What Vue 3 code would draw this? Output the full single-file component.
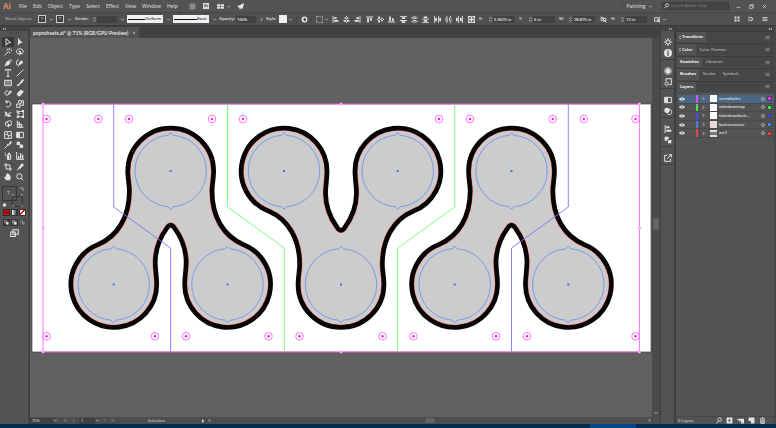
<script setup>
import { h, ref } from 'vue'

const glyphs = {
  chev: { s: 'M3 4.5L6 7.5L9 4.5' },
  spin: { s: 'M3 4.5L6 1.5L9 4.5M3 7.5L6 10.5L9 7.5' },
  left: { s: 'M8 3L4 6L8 9' },
  right: { s: 'M4 3L8 6L4 9' },
  first: { s: 'M9 3L5 6L9 9M3 3V9' },
  last: { s: 'M3 3L7 6L3 9M9 3V9' },
  play: { f: 'M3 1L10 6L3 11Z' },
  menu: { s: 'M1 3H11M1 6H11M1 9H11' },
  collapse: { f: 'M6 3V9L2 6ZM11 3V9L7 6Z' },
  bridge: { f: 'M1 1H11V11H1Z' },
  arrange: { f: 'M0 2H5V5.5H0ZM6 2H12V5.5H6ZM0 6.5H5V10H0ZM6 6.5H12V10H6Z' },
  rocket: { f: 'M12 0L0 6L4 8L5 12L7 9L10 10Z' },
  globe: { f: 'M6 1A5 5 0 1 0 6 11A5 5 0 1 0 6 1ZM6 3L9 5L8 9L5 8L4 5Z' },
  dashed: { s: 'M1 3V1H4M6 1H8M10 1H11V4M11 6V8M11 10V11H8M6 11H4M2 11H1V8M1 6V5' },
  hl: { f: 'M1 0H2.5V12H1ZM3.5 2H8V5H3.5ZM3.5 7H11V10H3.5Z' },
  hc: { f: 'M5.3 0H6.7V12H5.3ZM3 2H9V5H3ZM1 7H11V10H1Z' },
  hr: { f: 'M9.5 0H11V12H9.5ZM4 2H8.5V5H4ZM1 7H8.5V10H1Z' },
  vt: { f: 'M0 1H12V2.5H0ZM2 3.5H5V11H2ZM7 3.5H10V8H7Z' },
  vc: { f: 'M0 5.3H12V6.7H0ZM2 1H5V11H2ZM7 3H10V9H7Z' },
  vb: { f: 'M0 9.5H12V11H0ZM2 1H5V8.5H2ZM7 4H10V8.5H7Z' },
  dt: { f: 'M0 0H12V1.4H0ZM3 2H9V5H3ZM0 7H12V8.4H0ZM3 9H9V12H3Z' },
  dc: { f: 'M0 2.5H12V4H0ZM3 1H9V5H3ZM0 8.5H12V10H0ZM3 7H9V11H3Z' },
  db: { f: 'M3 1H9V4H3ZM0 4.5H12V6H0ZM3 7H9V10H3ZM0 10.5H12V12H0Z' },
  el: { f: 'M0 0H1.4V12H0ZM2 3H5V9H2ZM7 0H8.4V12H7ZM9 3H12V9H9Z' },
  ec: { f: 'M2.5 0H4V12H2.5ZM1 3H5V9H1ZM8.5 0H10V12H8.5ZM7 3H11V9H7Z' },
  er: { f: 'M0 3H3V9H0ZM3.6 0H5V12H3.6ZM7 3H10V9H7ZM10.6 0H12V12H10.6Z' },
  ref: { s: 'M1 1H11V11H1ZM1 6H11M6 1V11', f: 'M4 4H8V8H4ZM0 0H3V3H0ZM9 0H12V3H9ZM0 9H3V12H0ZM9 9H12V12H9Z' },
  link: { s: 'M2 3H6V8H2ZM6 4H10V9H6M1 1L11 11' },
  shape: { s: 'M1 3H7V9H1ZM9 1V11', f: 'M6 5L11 10H6Z' },
  grid: { f: 'M1 1H5V5H1ZM7 1H11V5H7ZM1 7H5V11H1ZM7 7H11V11H7Z' },
  snap: { s: 'M2 1V11M4 3H8V9H4', f: 'M8 4L11 6L8 8Z' },
  find: { s: 'M8 1.5A3 3 0 1 0 8 7.5A3 3 0 1 0 8 1.5M6 7L2 11' },
  min: { s: 'M1 8H11' },
  restore: { s: 'M1 4H8V11H1ZM4 4V1H11V8H8' },
  close: { s: 'M2 2L10 10M10 2L2 10' },
  select: { s: 'M3 1L10 7L6 7.5L3 11Z' },
  direct: { f: 'M3 0L10 7.5L6.5 7.5L3 11.5Z' },
  wand: { s: 'M1 11L7 5M8 0V3M8 6V8M4 3H6M10 4H12M5 1L6 2M11 1L10 2' },
  lasso: { s: 'M5 9C1 9 0 6 1 4C2 1 8 0 10 3C12 6 10 8 8 9M4 6C4 4 7 4 7 6', f: 'M5 4L10 9L7 9L5 12Z' },
  pen: { s: 'M1 11L5 7', f: 'M1 11L3 5L7 2L10 5L7 9ZM8 1L9 0L12 3L11 4Z' },
  curve: { s: 'M1 3C0 6 1 9 4 11M1 3L4 1', f: 'M3 10L5 5L8 2L11 5L8 8Z' },
  type: { s: 'M2 3V1H10V3M6 1V11M4 11H8' },
  line: { s: 'M1 11L11 1' },
  rect: { s: 'M1 2H11V10H1Z', f: 'M2 3H10V9H2Z', dim: true },
  brush: { s: 'M5 7L11 1', f: 'M1 11C2 7 4 6 6 8C6 10 4 11 1 11ZM5 6L10 0L12 2L7 8Z' },
  shaper: { s: 'M2 4A3 3 0 1 0 7 8M2 4C4 2 6 3 7 4', f: 'M5 8L10 2L12 4L7 9Z' },
  eraser: { f: 'M1 7L6 2L11 5L6 11L3 11ZM6 2L8 1L12 4L11 5Z' },
  rotate: { s: 'M3 3C6 0 11 3 10 7C9 11 4 11 3 9M3 0V4H6' },
  scale: { s: 'M1 6H6V11H1ZM4 5V1H11V8H7M6 6L9 3M7 3H9V5' },
  width: { s: 'M1 9C4 9 4 5 11 4', f: 'M1 2L5 4L4 8L8 6L11 10L6 10L2 7Z' },
  free: { s: 'M3 2H11V10H3ZM1 1L6 6', f: 'M1 0L5 4H1ZM9 0H12V3H9ZM9 9H12V12H9ZM1 9H4V12H1Z' },
  builder: { s: 'M5 2A3.5 3.5 0 1 0 6 9M5 5A3.5 3.5 0 1 1 9 8', f: 'M6 5L11 9L8 9L6 12Z' },
  persp: { s: 'M2 1V11H11M2 3L10 9M5 3V11M8 6V11M2 7H8' },
  mesh: { s: 'M1 1H11V11H1ZM1 6C4 3 8 9 11 6M6 1C3 4 9 8 6 11' },
  gradient: { s: 'M1 2H11V10H1Z', f: 'M1 2H6V10H1Z' },
  dropper: { s: 'M1 11L7 5', f: 'M5 4L8 7L7 8L4 5ZM7 4L10 0L12 2L9 6Z' },
  blend: { f: 'M1 1H6V6H1ZM8 5A3 3 0 1 0 8 11A3 3 0 1 0 8 5', s: 'M5 5L9 9' },
  spray: { s: 'M5 4H10V11H5ZM1 2H3M1 5H3', f: 'M5 5H8V11H5ZM6 1H9V3H6Z' },
  graph: { s: 'M1 0V11H12', f: 'M3 6H5V10H3ZM6 2H8V10H6ZM9 4H11V10H9Z' },
  artboard: { s: 'M3 0V9H12M0 3H9V12' },
  slice: { s: 'M2 11L5 7', f: 'M3 8L9 0L12 3L6 9Z' },
  hand: { f: 'M3 11L0 6L2 5L3 7V2H4.5V5V0.5H6V5V1H7.5V5V2.5H9V6L11 5L9 11Z' },
  zoom: { s: 'M5 1A4 4 0 1 0 5 9A4 4 0 1 0 5 1M8 8L11 11' },
  draw: { s: 'M4 1A3 3 0 1 0 4 7A3 3 0 1 0 4 1', f: 'M5 5H11V11H5Z' },
  screen: { s: 'M4 1H11V7H4ZM1 4H7V10H1Z' },
  gear: { s: 'M6 3A3 3 0 1 0 6 9A3 3 0 1 0 6 3M6 0V3M6 9V12M0 6H3M9 6H12M2 2L4 4M8 8L10 10M10 2L8 4M4 8L2 10' },
  info: { f: 'M6 0A6 6 0 1 0 6 12A6 6 0 1 0 6 0ZM5 2H7V4H5ZM5 5H7V10H5Z' },
  sun: { f: 'M6 2A4 4 0 1 0 6 10A4 4 0 1 0 6 2', s: 'M6 .5A5.500 5.500 0 1 0 6 11.500A5.500 5.500 0 1 0 6 .5', thin: true },
  styles: { s: 'M3 5V1H11V10H8M4 6A2.5 2.5 0 1 0 4 11A2.5 2.5 0 1 0 4 6' },
  trans: { f: 'M4.5 1A4 4 0 1 0 4.5 9A4 4 0 1 0 4.5 1', s: 'M8 3.5A4 4 0 1 1 4.5 9.5' },
  path: { f: 'M1 1H7V5H5V7H1ZM7 6H11V11H6V7H7Z' },
  export: { s: 'M5 2H1V11H10V7M5 7L11 1M7 1H11V5' },
  eye: { f: 'M0 6C3 2 9 2 12 6C9 10 3 10 0 6ZM6 4.5A1.5 1.5 0 1 0 6 7.5A1.5 1.5 0 1 0 6 4.5' },
  mask: { f: 'M1 1H11V11H1ZM6 4A2 2 0 1 0 6 8A2 2 0 1 0 6 4' },
  sub: { s: 'M0 4H4M4 4V8', f: 'M4 3H12V11H7V7H4Z' },
  page: { f: 'M1 1H11V11H5V7H1Z' },
  trash: { s: 'M2 3H10M5 1H7M3 4V11H9V4M5 5V10M7 5V10' }
}
const Icon = (p) => {
  const g = glyphs[p.name]
  const kids = []
  if (g.f) kids.push(h('path', { d: g.f, fill: 'currentColor', 'fill-rule': 'evenodd', 'fill-opacity': g.dim ? 0.35 : 1 }))
  if (g.s) kids.push(h('path', { d: g.s, fill: 'none', stroke: 'currentColor', 'stroke-width': g.thin ? 0.7 : 1.5 }))
  return h('svg', { viewBox: '0 0 12 12', 'aria-hidden': 'true' }, kids)
}
Icon.props = ['name']

const menus = ['File', 'Edit', 'Object', 'Type', 'Select', 'Effect', 'View', 'Window', 'Help']
const aligns = ['hl', 'hc', 'hr', 'vt', 'vc', 'vb', 'dt', 'dc', 'db', 'el', 'ec', 'er', 'ref']
const toolGroups = [
  ['select', 'direct', 'wand', 'lasso'],
  ['pen', 'curve', 'type', 'line', 'rect', 'brush', 'shaper', 'eraser'],
  ['rotate', 'scale', 'width', 'free', 'builder', 'persp'],
  ['mesh', 'gradient', 'dropper', 'blend'],
  ['spray', 'graph'],
  ['artboard', 'slice', 'hand', 'zoom']
]
const dockGroups = [['gear', 'info'], ['sun', 'styles'], ['gradient', 'trans'], ['hl', 'path'], ['export']]
const panels = [['Transform'], ['Color', 'Color Themes'], ['Swatches', 'Libraries'], ['Brushes', 'Stroke', 'Symbols'], ['Layers']]
const layers = ref([
  { name: 'screwholes', color: '#e04fe8', dot: '#ff2cff' },
  { name: 'takedowntop', color: '#4fe04f', dot: '#2ce83c' },
  { name: 'takedownbott...', color: '#5048e0', dot: '#3c3cff' },
  { name: 'buttonvector', color: '#4a80e0', dot: '#3c8cff' },
  { name: 'art2', color: '#e04a4a', dot: '#ff3c2c' }
])
const activeLayer = ref(0)
const activeTool = ref('select')

const body = 'M-43 0A43 43 0 0 1 43 0C43 9 41.4 13 41.4 20C41.4 46 53 65 72.4 73.3A43 43 0 1 1 13.9 113.5C13.9 105 15.4 99 15.4 91C15.2 78 11 67 3.7 57Q0 51.500 -3.700 57C-11 67 -15.200 78 -15.400 91C-15.400 99 -13.900 105 -13.900 113.500A43 43 0 1 1 -72.400 73.300C-53 65 -41.400 46 -41.400 20C-41.400 13 -43 9 -43 0Z'
const spinners = ['translate(170.7 171)', 'translate(341 284.500) rotate(180)', 'translate(511.500 171)']
const hubs = [[171, [170.7, 284, 397.7, 511.5]], [284.5, [113.7, 227.5, 341, 454.7, 568.3]]]
  .flatMap(([y, xs]) => xs.map((x) => [x, y]))
const screws = [
  [119, [46.5, 98.3, 129, 212, 243, 439, 470, 552.7, 583.8, 635.5]],
  [336.3, [46.5, 155, 186, 268.5, 299.5, 382.5, 413.5, 496, 527, 635.5]]
].flatMap(([y, xs]) => xs.map((x) => [x, y]))
const handles = [43, 341, 639.5].flatMap((x) => [104, 228, 352].map((y) => [x, y])).filter(([x, y]) => x !== 341 || y !== 228)
</script>

<template>
  <div class="app">
    <header class="menubar">
      <span class="logo">Ai</span>
      <nav><button v-for="m in menus" :key="m">{{ m }}</button></nav>
      <i class="rule"></i>
      <button class="app-icon dim" aria-label="Bridge"><Icon name="bridge" /></button>
      <button class="app-icon stock">St</button>
      <button class="app-icon" aria-label="Arrange documents"><Icon name="arrange" /></button>
      <button class="chev" aria-label="Arrange options"><Icon name="chev" /></button>
      <button class="app-icon rocket" aria-label="Performance"><Icon name="rocket" /></button>
      <span class="grow"></span>
      <button class="workspace">Painting <Icon name="chev" /></button>
      <label class="search"><Icon name="find" /><input type="search" placeholder="Search Adobe Help" aria-label="Search Adobe Help" /></label>
      <div class="window-buttons">
        <button v-for="w in ['min', 'restore', 'close']" :key="w" :aria-label="w"><Icon :name="w" /></button>
      </div>
    </header>

    <div class="control">
      <span class="kind">Mixed Objects</span>
      <template v-for="s in ['Fill', 'Stroke colour']" :key="s">
        <button class="unknown" :aria-label="s">?</button>
        <button class="chev wide" :aria-label="s + ' options'"><Icon name="chev" /></button>
      </template>
      <label class="stroke" for="stroke">Stroke:</label>
      <button class="chev" aria-label="Step stroke"><Icon name="spin" /></button>
      <input id="stroke" class="w18" />
      <button class="chev wide" aria-label="Stroke options"><Icon name="chev" /></button>
      <label class="profile"><i></i><select aria-label="Width profile"><option>Uniform</option></select></label>
      <span class="chev wide"><Icon name="chev" /></span>
      <label class="profile"><i></i><select aria-label="Brush"><option>Basic</option></select></label>
      <span class="chev wide"><Icon name="chev" /></span>
      <label class="opacity" for="opacity">Opacity:</label>
      <input id="opacity" class="w20" value="100%" />
      <button class="chev wide" aria-label="Opacity slider"><Icon name="right" /></button>
      <span class="style">Style:</span>
      <button class="swatch" aria-label="Graphic style"></button>
      <button class="chev" aria-label="Style options"><Icon name="chev" /></button>
      <i class="rule"></i>
      <button class="tool" aria-label="Recolor"><Icon name="globe" /></button>
      <i class="rule"></i>
      <button class="tool dashed" aria-label="Align to"><Icon name="dashed" /></button>
      <button class="chev tight" aria-label="Align options"><Icon name="chev" /></button>
      <div class="aligns"><button v-for="a in aligns" :key="a" :aria-label="a"><Icon :name="a" /></button></div>
      <template v-for="f in [['X', '5.5625 in'], ['Y', '6 in'], ['W', '28.875 in']]" :key="f[0]">
        <label class="axis" :for="f[0]">{{ f[0] }}:</label>
        <button class="chev" :aria-label="'Step ' + f[0]"><Icon name="spin" /></button>
        <input :id="f[0]" class="w22" :value="f[1]" />
      </template>
      <button class="tool link" aria-label="Constrain proportions"><Icon name="link" /></button>
      <label class="axis" for="H">H:</label>
      <button class="chev" aria-label="Step H"><Icon name="spin" /></button>
      <input id="H" class="w22" value="12 in" />
      <button class="tool shape" aria-label="Isolate"><Icon name="shape" /></button>
      <button class="chev" aria-label="Isolate options"><Icon name="chev" /></button>
      <span class="grow"></span>
      <div class="tail">
        <button v-for="t in ['grid', 'snap', 'menu']" :key="t" :aria-label="t"><Icon :name="t" /></button>
      </div>
    </div>

    <div class="main">
      <aside class="tools">
        <div class="strip"><Icon name="collapse" /></div>
        <div class="grip"></div>
        <div class="groups">
          <div v-for="(g, i) in toolGroups" :key="i" class="group">
            <button v-for="t in g" :key="t" :class="{ on: t === activeTool }" :aria-label="t" @click="activeTool = t"><Icon :name="t" /></button>
          </div>
        </div>
        <svg class="fillstroke" viewBox="0 0 28 24" aria-label="Fill and stroke">
          <rect x="2.500" y="1.500" width="14" height="14" fill="#535353" stroke="#353535" />
          <text x="7" y="10">?</text>
          <rect x="12.500" y="11.500" width="10" height="10" fill="none" stroke="#353535" />
          <path d="M12 10h2M21 10h2M12 21h2M21 21h2M20 3h3v3" fill="none" stroke="#aaa" />
          <circle cx="4.500" cy="20" r="1.800" fill="#ddd" />
        </svg>
        <div class="modes">
          <button class="red" aria-label="Color"></button>
          <button class="grad" aria-label="Gradient"></button>
          <button class="none" aria-label="None"></button>
        </div>
        <div class="modes">
          <button v-for="n in 3" :key="n" :class="{ on: n === 1, dim: n === 3 }" :aria-label="'Draw mode ' + n"><Icon name="draw" /></button>
        </div>
        <button class="screen" aria-label="Screen mode"><Icon name="screen" /></button>
      </aside>

      <section class="document">
        <div class="tabs"><button>popnsheets.ai* @ 71% (RGB/GPU Preview)<Icon name="close" /></button></div>
        <div class="view">
          <svg class="art" viewBox="30 38 622 379" role="img" aria-label="Artboard">
            <defs>
              <path id="body" :d="body" />
              <clipPath id="inside"><use href="#body" /></clipPath>
            </defs>
            <rect x="32" y="104" width="619" height="248" fill="#fff" stroke="#333" stroke-width=".6" />
            <g v-for="s in spinners" :key="s" :transform="s">
              <use href="#body" fill="#ccc" />
              <use href="#body" fill="none" stroke="#e84040" stroke-width="5.400" clip-path="url(#inside)" />
              <use href="#body" fill="none" stroke="#050505" stroke-width="4.600" />
            </g>
            <g v-for="([x, y], i) in hubs" :key="i" :transform="`translate(${x} ${y})`">
              <path d="M-2.600 -35.700C-1.500 -35.700 -1.800 -38 0 -38C1.800 -38 1.500 -35.700 2.600 -35.700A35.800 35.800 0 0 1 2.600 35.700C1.500 35.700 1.800 38 0 38C-1.800 38 -1.500 35.700 -2.600 35.700A35.800 35.800 0 0 1 -2.600 -35.700Z" fill="none" stroke="#7094ee" stroke-width=".9" />
              <rect x="-1" y="-1" width="2" height="2" fill="#3a72f0" />
            </g>
            <g fill="none" stroke="#7878f4" stroke-width=".9">
              <path d="M113.700 104V207L170.600 248V352M568.300 104V207L511.500 248V352" />
              <path stroke="#6dff6d" d="M227.500 104V207L284.300 248V352M454.700 104V207L397.700 248V352" />
            </g>
            <g v-for="([x, y], i) in screws" :key="'s' + i">
              <circle :cx="x" :cy="y" r="3.800" fill="none" stroke="#ff62f5" stroke-width=".9" />
              <circle :cx="x" :cy="y" r="1.200" fill="#f020e8" />
            </g>
            <rect x="43" y="104" width="596.500" height="248" fill="none" stroke="#ff6cf8" stroke-width=".9" />
            <rect v-for="([x, y], i) in handles" :key="'h' + i" :x="x - 1" :y="y - 1" width="2" height="2" fill="#fff" stroke="#ff6cf8" stroke-width=".6" />
          </svg>
          <div class="vbar"><i></i><Icon name="chev" /></div>
        </div>
        <footer class="status">
          <select class="zoom" aria-label="Zoom"><option>70%</option></select>
          <Icon name="chev" />
          <button aria-label="First artboard" class="dim lead"><Icon name="first" /></button>
          <button aria-label="Previous artboard" class="dim"><Icon name="left" /></button>
          <select class="board" aria-label="Artboard number"><option>1</option></select>
          <Icon name="chev" />
          <button aria-label="Next artboard" class="dim"><Icon name="right" /></button>
          <button aria-label="Last artboard" class="dim"><Icon name="last" /></button>
          <span class="mode">Selection</span>
          <button aria-label="Status menu" class="play"><Icon name="play" /></button>
          <div class="hbar"><Icon name="left" /><i></i><Icon name="right" /></div>
        </footer>
      </section>

      <aside class="dock">
        <div class="strip"><Icon name="collapse" /></div>
        <div v-for="(g, i) in dockGroups" :key="i" class="dock-group">
          <button v-for="d in g" :key="d" :aria-label="d"><Icon :name="d" /></button>
        </div>
      </aside>

      <aside class="panels">
        <div class="strip"><Icon name="collapse" /></div>
        <div class="stack">
          <div v-for="(p, i) in panels" :key="i" class="panel">
            <button v-for="(t, k) in p" :key="t" :class="{ current: k === 0 }"><Icon v-if="k === 0 && i < 2" name="spin" />{{ t }}</button>
            <Icon name="menu" class="burger" />
          </div>
        </div>
        <div class="layers">
          <ul>
            <li v-for="(l, i) in layers" :key="l.name" :class="{ picked: i === activeLayer }" @click="activeLayer = i">
              <Icon name="eye" class="eye" />
              <i class="bar" :style="{ background: l.color }"></i>
              <Icon name="right" class="open" />
              <i class="thumb" :class="'thumb' + i"></i>
              <span>{{ l.name }}</span>
              <i class="target"></i>
              <i class="dot" :style="{ background: l.dot }"></i>
            </li>
          </ul>
        </div>
        <footer class="layer-foot">
          <span>5 Layers</span>
          <button v-for="b in ['find', 'mask', 'sub', 'page', 'trash']" :key="b" :aria-label="b"><Icon :name="b" /></button>
        </footer>
      </aside>
    </div>
    <div class="taskbar"><i></i></div>
  </div>
</template>

<style>
html, body { background: #535353; }
</style>

<style scoped>
.app { display: flex; flex-direction: column; height: 100vh; overflow: hidden; background: #535353; color: #e2e2e2; font: 4px/6px "Open Sans", "Noto Sans", sans-serif; }
.app * { box-sizing: border-box; }
button, input, select { font: inherit; color: inherit; background: none; border: 0; padding: 0; margin: 0; appearance: none; outline: 0; border-radius: 0; }
button { display: inline-flex; align-items: center; justify-content: center; flex: none; }
svg { display: block; flex: none; width: 6px; height: 6px; }
i { display: block; }
.dim { opacity: .4; }
.rule { width: 1px; height: 9px; background: #484848; flex: none; }

.menubar { display: flex; align-items: center; height: 13px; flex: none; border-bottom: 1px solid #474747; font-size: 5px; }
.menubar > * { flex: none; }
.menubar > .grow { flex: 1; }
.logo { color: #d98c5f; font-size: 8px; line-height: 12px; font-weight: 700; width: 19px; padding-left: 3px; }
.menubar nav { display: flex; gap: 6px; width: 161px; }
.menubar nav button::first-letter { text-decoration: underline; }
.app-icon { width: 8px; margin-left: 7px; }
.stock { height: 6px; width: 6px; background: #ddd; color: #444; font-size: 4px; font-weight: 700; }
.chev { width: 6px; flex: none; display: inline-flex; align-items: center; justify-content: center; }
.chev svg, .workspace svg { width: 5px; height: 5px; }
.app-icon + .chev { margin-left: 1px; }
.rocket svg, .app-icon svg { width: 7px; height: 7px; }
.rocket { margin-left: 5px; }
.workspace { gap: 3px; width: 33px; height: 10px; border-left: 1px solid #484848; padding-left: 2px; }
.search { display: flex; align-items: center; gap: 2px; height: 8px; width: 67px; background: #454545; border: 1px solid #3d3d3d; margin: 0 7px; font-size: 4px; }
.search input { min-width: 0; flex: 1; height: 6px; }
.search input::placeholder { color: #8a8a8a; opacity: 1; }
.window-buttons { display: flex; gap: 8px; width: 40px; align-items: center; }
.window-buttons svg { width: 5px; height: 5px; }

.control { display: flex; align-items: center; height: 13px; flex: none; background: #505050; border-bottom: 1px solid #3c3c3c; padding-left: 5px; font-weight: 600; }
.control > * { flex: none; }
.control > .grow { flex: 1; }
.control input { height: 7px; background: #414141; padding: 0 1px; color: #e8e8e8; }
.kind { width: 33px; color: #c2c2c2; font-weight: 400; white-space: nowrap; }
.unknown { width: 8px; height: 8px; border: 1px solid #ccc; background: #3f3f3f; }
.wide { width: 10px; }
.stroke { width: 17px; padding-left: 1px; }
.w18 { width: 20px; }
.w20 { width: 20px; }
.w22 { width: 22px; }
.profile { display: flex; align-items: center; width: 36px; height: 8px; background: #f2f0f2; color: #333; padding: 0 1px; }
.profile i { flex: 1; height: 1px; background: #111; }
.profile select { height: 6px; }
.opacity { width: 17px; }
.style { width: 13px; }
.swatch { width: 8px; height: 8px; background: #eee; }
.tool { width: 8px; }
.tool svg { width: 7px; height: 7px; }
.control .rule { margin: 0 3px; }
.dashed { opacity: .8; }
.tight { margin-right: 3px; }
.aligns { display: flex; gap: 4px; width: 147px; }
.aligns svg { width: 7px; height: 7px; }
.aligns button { width: 7px; }
.aligns button:nth-child(3n + 4) { margin-left: 1px; }
.axis { width: 8px; }
.control .w22 + .axis { margin-left: 4px; }
.link { margin: 0 4px; }
.shape { margin-left: 6px; }
.tail { display: flex; gap: 6px; padding-right: 7px; }
.tail button { width: 8px; }

.main { display: flex; flex: 1; min-height: 0; }
.strip { height: 5px; background: #434343; display: flex; justify-content: flex-end; align-items: center; padding-right: 2px; flex: none; }
.strip svg { width: 4px; height: 4px; }
.tools { width: 29px; flex: none; display: flex; flex-direction: column; border-right: 1px solid #474747; align-items: flex-start; }
.tools .strip { width: 100%; justify-content: flex-start; padding-left: 2px; }
.grip { width: 9px; height: 2px; margin: 1px 10px 3px; border: dotted #3b3b3b; border-width: 1px 0 0; }
.groups { display: grid; gap: 1px; padding-left: 2px; }
.group { display: grid; grid-template-columns: 12px 12px; grid-auto-rows: 10px; }
.group svg { width: 8px; height: 8px; }
.group button.on { background: #383838; }
.fillstroke { width: 28px; height: 24px; margin-top: 3px; }
.fillstroke text { font-size: 6px; fill: #ddd; }
.modes { display: flex; gap: 1px; padding-left: 3px; margin-bottom: 3px; }
.modes button { width: 7px; height: 7px; border: 1px solid #333; }
.modes .red { border: 1px solid #2c2c2c; background: radial-gradient(#400 20%, #d00 40%); }
.modes .grad { background: linear-gradient(90deg, #fff, #222); }
.modes .none { background: linear-gradient(135deg, #fff 40%, #e00 40% 60%, #fff 60%); }
.modes .on { background: #383838; }
.modes svg { width: 5px; height: 5px; }
.screen { width: 28px; }
.screen svg { width: 9px; height: 9px; }

.document { flex: 1; min-width: 0; display: flex; flex-direction: column; border-left: 1px solid #3c3c3c; }
.tabs { height: 12px; background: #424242; flex: none; display: flex; }
.tabs button { background: #535353; padding: 0 3px; gap: 4px; font-family: Lato, sans-serif; font-weight: 700; font-size: 5px; border-top: 1px solid #3c3c3c; }
.tabs svg { width: 4px; height: 4px; }
.view { flex: 1; min-height: 0; display: flex; background: #616161; }
.art { flex: 1; width: 0; height: 100%; }
.vbar { width: 8px; background: #4a4a4a; display: flex; flex-direction: column; align-items: center; }
.vbar i { width: 6px; height: 12px; border-radius: 3px; background: #646464; margin: auto 0; }
.vbar svg { margin-bottom: 1px; }
.status { height: 7px; flex: none; background: #4d4d4d; display: flex; align-items: center; }
.status > * { flex: none; }
.status svg { width: 5px; height: 5px; }
.status select { height: 6px; background: #414141; padding: 0 2px; }
.zoom { width: 23px; }
.board { width: 16px; margin-left: 2px; }
.status button { width: 7px; margin-left: 1px; }
.status .lead { margin-left: 4px; }
.mode { margin-left: 32px; width: 50px; }
.status .play svg { width: 4px; height: 4px; }
.status .hbar { flex: 1; height: 7px; display: flex; align-items: center; justify-content: space-between; padding-right: 8px; border-left: 1px solid #444; }
.hbar i { width: 10px; height: 5px; border-radius: 3px; background: #646464; }

.dock { width: 16px; flex: none; border: solid #3f3f3f; border-width: 0 2px 0 1px; background: #535353; }
.dock-group { display: grid; justify-items: center; padding: 5px 0 1px; border-bottom: 1px solid #3f3f3f; }
.dock-group button { height: 11px; }
.dock-group svg { width: 8px; height: 8px; }

.panels { width: 100px; flex: none; display: flex; flex-direction: column; border-right: 2px solid #484848; }
.stack { display: flex; flex-direction: column; height: 62px; flex: none; }
.panel { flex: 1; display: flex; align-items: stretch; background: #464646; border-top: 1px solid #3c3c3c; padding-left: 1px; border-bottom: 1px solid #4a4a4a; }
.panel button { padding: 0 3px; color: #b4b4b4; margin-right: 1px; font-weight: 600; }
.panel button svg { width: 4px; height: 5px; margin-left: -2px; }
.panel .current { background: #535353; color: #f4f4f4; font-weight: 700; }
.panel .burger { width: 5px; height: 5px; margin: auto 4px auto auto; color: #999; }
.layers { flex: 1; padding-top: 2px; }
.layers ul { list-style: none; margin: 0; padding: 0; height: 43px; display: flex; flex-direction: column; border-left: 2px solid #4b4b4b; }
.layers li { flex: 1; display: flex; align-items: center; border-bottom: 1px solid #4a4a4a; font-weight: 600; padding-right: 2px; }
.layers .picked { background: #4c6784; }
.eye { margin: 0 11px 0 1px; }
.bar { width: 2px; align-self: stretch; }
.open { width: 5px; height: 5px; margin: 0 4px 0 3px; }
.thumb { width: 7px; height: 7px; background: #fff; margin-right: 2px; }
.thumb3 { background: #ecd5d5; }
.thumb4 { background: linear-gradient(#ddd 30%, #777 30% 70%, #ddd 70%); }
.layers span { flex: 1; white-space: nowrap; }
.target { width: 4px; height: 4px; border: 1px solid #aaa; border-radius: 50%; margin-right: 2px; }
.dot { width: 5px; height: 5px; border: 1px solid #444; }
.layer-foot { height: 8px; display: flex; align-items: center; padding: 0 8px 0 2px; gap: 4px; border-top: 1px solid #484848; }
.layer-foot span { flex: 1; }
.layer-foot svg { width: 7px; height: 7px; }
.taskbar { height: 4px; flex: none; background: #022c50; display: flex; }
.taskbar i { width: 6%; margin-left: 76%; background: #064887; }
</style>
